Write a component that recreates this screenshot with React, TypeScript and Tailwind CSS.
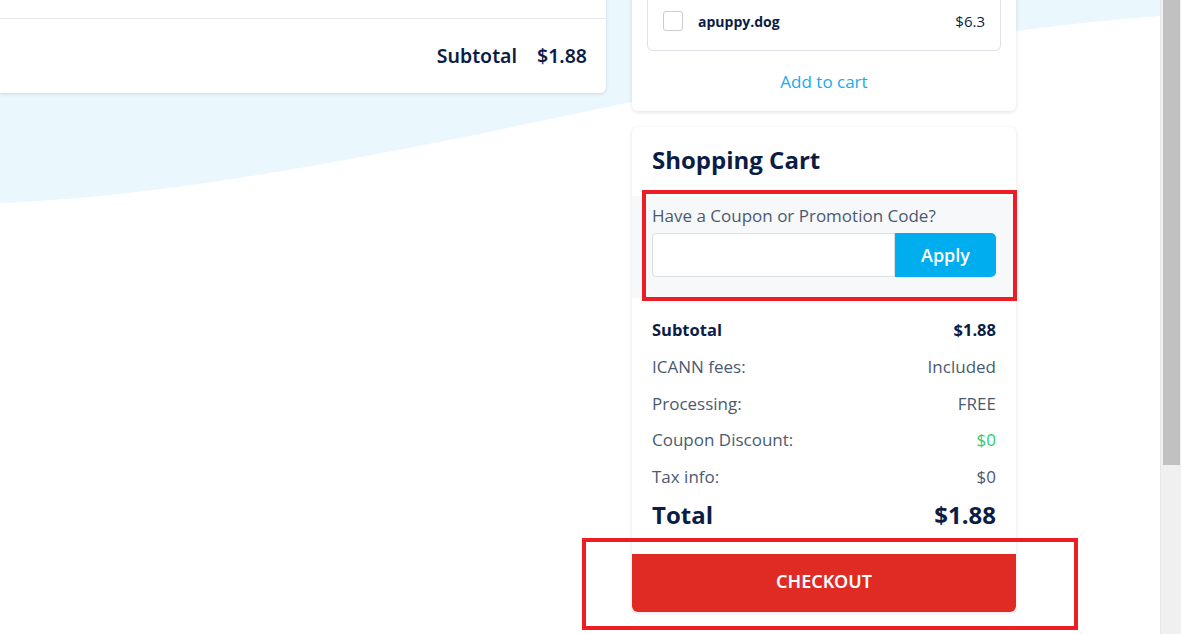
import React from "react";

const navy = "text-[#0b1d45]";

function Row({ label, value, valueClass = "" }: { label: string; value: string; valueClass?: string }) {
  return (
    <div className="flex h-[36.5px] items-center justify-between text-[17px] text-[#4b5a70]">
      <span>{label}</span>
      <span className={valueClass}>{value}</span>
    </div>
  );
}

export default function App() {
  return (
    <div
      className="relative flex h-[634px] w-[1181px] overflow-hidden bg-white"
      style={{ fontFamily: "'Open Sans', 'Noto Sans', sans-serif" }}
    >
      <div className="relative flex-1">
        <svg className="absolute left-0 top-0" width="1160" height="634" viewBox="0 0 1160 634">
          <path d="M0 0 H1160 V16 C 800 40, 350 190, 0 203 Z" fill="#eaf7fd" />
        </svg>

        <div className="relative flex gap-[26px]">
          {/* left card */}
          <div className="mt-[-40px] h-[133px] w-[606px] rounded-br-md bg-white shadow-[0_1px_4px_rgba(0,0,0,0.12)]">
            <div className="h-[59px] border-b border-[#e8e8e8]" />
            <div
              className={`flex h-[73px] items-center justify-end gap-[20px] pr-[19px] text-[19.5px] font-semibold ${navy}`}
              style={{ fontFamily: "'Noto Sans', sans-serif" }}
            >
              <span>Subtotal</span>
              <span>$1.88</span>
            </div>
          </div>

          {/* right column */}
          <div className="flex w-[384px] flex-col gap-[16px]">
            <div className="mt-[-20px] h-[131px] rounded-b-md bg-white px-[15px] shadow-[0_1px_4px_rgba(0,0,0,0.12)]">
              <div className="flex h-[71px] items-end rounded-b-md border border-t-0 border-[#dfe3e8] px-[15px] pb-[7px]">
                <div className="flex h-[44px] w-full items-center">
                  <div className="h-[20px] w-[20px] rounded-[3px] border border-[#c9ccd1] bg-white" />
                  <span className={`ml-[15px] text-[14px] font-bold ${navy}`}>apuppy.dog</span>
                  <span className={`ml-auto text-[15px] ${navy}`}>$6.3</span>
                </div>
              </div>
              <div className="flex h-[61px] items-center justify-center text-[17px] text-[#1aa9ee]">Add to cart</div>
            </div>

            <div className="flex h-[485px] flex-col rounded-md bg-white shadow-[0_1px_4px_rgba(0,0,0,0.12)]">
              <div className={`px-[20px] pt-[17px] text-[24px] font-bold leading-[32px] ${navy}`}>Shopping Cart</div>
              <div className="relative mt-[20px] h-[102px] bg-[#f6f8fa] px-[20px] pt-[9px]">
                <div className="text-[17px] leading-[22px] text-[#4b5a70]">Have a Coupon or Promotion Code?</div>
                <div className="mt-[6px] flex h-[44px]">
                  <div className="flex-1 rounded-l-[4px] border border-[#dcdfe3] bg-white" />
                  <button className="w-[101px] rounded-r-[5px] bg-[#00adef] text-[18px] font-semibold text-white">
                    Apply
                  </button>
                </div>
                <div className="pointer-events-none absolute left-[10px] right-[-1px] top-[-6px] bottom-[-3px] border-[4px] border-[#ee1c25]" />
              </div>
              <div className="mt-[14px] px-[20px]">
                <div className={`flex h-[36.5px] items-center justify-between text-[16.5px] font-bold ${navy}`}>
                  <span>Subtotal</span>
                  <span>$1.88</span>
                </div>
                <Row label="ICANN fees:" value="Included" />
                <Row label="Processing:" value="FREE" />
                <Row label="Coupon Discount:" value="$0" valueClass="text-[#2ecc71]" />
                <Row label="Tax info:" value="$0" />
                <div className={`flex h-[40px] items-center justify-between text-[24px] font-bold ${navy}`}>
                  <span>Total</span>
                  <span>$1.88</span>
                </div>
              </div>
              <div className="relative mt-auto">
                <button
                  className="flex h-[58px] w-full items-center justify-center rounded-b-md bg-[#e02b24] pb-[3px] text-[18px] font-semibold text-white"
                  style={{ fontFamily: "'Noto Sans', sans-serif" }}
                >
                  CHECKOUT
                </button>
                <div className="pointer-events-none absolute left-[-50px] right-[-62px] top-[-16px] bottom-[-18px] border-[4px] border-[#ee1c25]" />
              </div>
            </div>
          </div>
        </div>
      </div>

      {/* scrollbar */}
      <div className="relative h-full w-[21px] border-l border-[#e6e6e6] bg-[#f0f0f0]">
        <div className="absolute left-[2px] top-0 h-[465px] w-[17px] bg-[#c1c1c1]" />
      </div>
    </div>
  );
}
